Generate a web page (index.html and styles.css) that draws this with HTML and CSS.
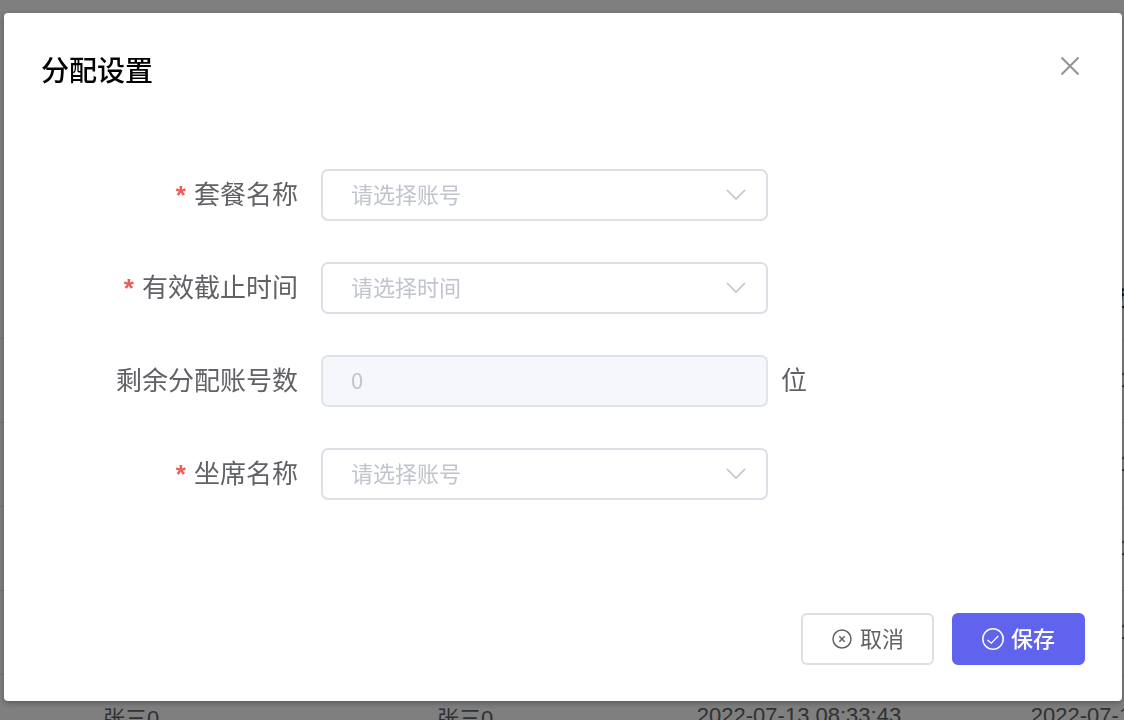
FILE: index.html
```html
<!DOCTYPE html>
<html lang="zh-CN">
<head>
  <meta charset="UTF-8" />
  <meta name="viewport" content="width=device-width, initial-scale=1.0"/>
  <title>分配设置</title>
  <link rel="stylesheet" href="styles.css">
</head>
<body>
  <!-- List page behind the dialog -->
  <div class="page" aria-hidden="true">
    <table class="list">
      <tbody>
        <tr><td></td><td></td><td></td><td class="head">最近时间</td></tr>
        <tr><td></td><td></td><td></td><td>2022-07-13 08:33:43</td></tr>
        <tr><td></td><td></td><td></td><td>2022-07-13 08:33:43</td></tr>
        <tr><td></td><td></td><td></td><td>2022-07-13 08:33:43</td></tr>
        <tr><td></td><td></td><td></td><td>2022-07-13 08:33:43</td></tr>
        <tr><td>张三0</td><td>张三0</td><td>2022-07-13 08:33:43</td><td>2022-07-13 08:33:43</td></tr>
      </tbody>
    </table>
  </div>

  <div class="overlay">
    <form class="dialog" role="dialog" aria-labelledby="dialogTitle">
      <div class="dialog-header">
        <h1 id="dialogTitle">分配设置</h1>
        <button type="button" class="close-btn" aria-label="关闭">
          <svg viewBox="0 0 20 20" width="20" height="20"><path d="M1.5 1.5l17 17M18.5 1.5l-17 17"/></svg>
        </button>
      </div>

      <div class="dialog-body">
        <div class="form-item">
          <label class="required" for="packageName">套餐名称</label>
          <div class="field">
            <select id="packageName" required>
              <option value="">请选择账号</option>
            </select>
            <svg class="arrow" viewBox="0 0 20 12" width="20" height="12"><path d="M1 1l9 9L19 1"/></svg>
          </div>
        </div>
        <div class="form-item">
          <label class="required" for="endTime">有效截止时间</label>
          <div class="field">
            <select id="endTime" required>
              <option value="">请选择时间</option>
            </select>
            <svg class="arrow" viewBox="0 0 20 12" width="20" height="12"><path d="M1 1l9 9L19 1"/></svg>
          </div>
        </div>
        <div class="form-item">
          <label for="remaining">剩余分配账号数</label>
          <div class="field">
            <input type="text" id="remaining" value="0" disabled>
          </div>
          <span class="unit">位</span>
        </div>
        <div class="form-item">
          <label class="required" for="seatName">坐席名称</label>
          <div class="field">
            <select id="seatName" required>
              <option value="">请选择账号</option>
            </select>
            <svg class="arrow" viewBox="0 0 20 12" width="20" height="12"><path d="M1 1l9 9L19 1"/></svg>
          </div>
        </div>
      </div>

      <div class="dialog-footer">
        <button type="button" class="btn">
          <svg viewBox="0 0 22 22" width="22" height="22"><circle cx="11" cy="11" r="9"/><path d="M8.3 8.3l5.4 5.4M13.7 8.3l-5.4 5.4"/></svg>
          <span>取消</span>
        </button>
        <button type="button" class="btn btn-primary">
          <svg viewBox="0 0 22 22" width="22" height="22"><circle cx="11" cy="11" r="10.2"/><path d="M5.5 12l3.8 3.2 7-7.2" stroke-width="1.2"/></svg>
          <span>保存</span>
        </button>
      </div>
    </form>
  </div>
</body>
</html>
```

FILE: styles.css
```css
* {
  box-sizing: border-box;
}

body {
  margin: 0;
  font-family: "Liberation Sans", "Noto Sans CJK SC", sans-serif;
  color: #606266;
  background: #fff;
}

.page {
  height: 100vh;
  overflow: hidden;
  padding-top: 254px;
}

.list {
  width: 1336px;
  margin-left: -36px;
  table-layout: fixed;
  border-collapse: collapse;
}

.list td {
  height: 84px;
  padding: 0;
  border-bottom: 1px solid #dfe1e6;
  font-size: 22px;
  text-align: center;
  white-space: nowrap;
}

.list .head {
  color: #303133;
  font-weight: bold;
}

.overlay {
  position: fixed;
  inset: 0;
  padding: 13px 2px 0 4px;
  background: rgba(0, 0, 0, 0.5);
}

.dialog {
  padding: 36px 37px;
  background: #fff;
  border-radius: 4px;
  box-shadow: 0 2px 6px rgba(0, 0, 0, 0.3);
  font-family: "Noto Sans CJK SC", sans-serif;
}

.dialog-header {
  display: flex;
  justify-content: space-between;
  align-items: flex-start;
}

h1 {
  margin: 0;
  font-size: 28px;
  line-height: 40px;
  font-weight: 500;
  color: #000;
}

svg {
  flex: none;
  fill: none;
  stroke: currentColor;
}

.close-btn {
  display: flex;
  padding: 7px 5px;
  border: none;
  background: none;
  color: #909399;
  cursor: pointer;
}

.close-btn svg {
  stroke-width: 2;
}

.dialog-body {
  display: flex;
  flex-direction: column;
  gap: 41px;
  padding: 80px 0 113px;
}

.form-item {
  display: flex;
  height: 52px;
}

.form-item label {
  width: 257px;
  font-size: 26px;
  line-height: 48px;
  text-align: right;
}

.required::before {
  content: "*";
  margin-right: 8px;
  font-family: "Liberation Sans", sans-serif;
  font-weight: bold;
  color: #f15b52;
}

.field {
  position: relative;
  width: 447px;
  margin-left: 23px;
}

.field select,
.field input {
  display: block;
  width: 100%;
  height: 52px;
  padding: 0 28px 4px;
  border: 2px solid #dcdfe6;
  border-radius: 7px;
  background: #fff;
  font-family: inherit;
  font-size: 22px;
  color: #c0c4cc;
  appearance: none;
}

.field input:disabled {
  border-color: #e0e4ed;
  background: #f5f7fa;
  opacity: 1;
}

.arrow {
  position: absolute;
  top: 20px;
  right: 22px;
  color: #c0c4cc;
  stroke-width: 1.6;
  pointer-events: none;
}

.unit {
  margin-left: 13px;
  font-size: 26px;
  line-height: 48px;
}

.dialog-footer {
  display: flex;
  justify-content: flex-end;
  gap: 18px;
}

.btn {
  display: flex;
  align-items: center;
  justify-content: center;
  gap: 7px;
  width: 133px;
  height: 52px;
  padding: 0;
  border: 2px solid #dcdfe6;
  border-radius: 6px;
  background: #fff;
  font-family: inherit;
  font-size: 22px;
  line-height: 32px;
  color: #606266;
  cursor: pointer;
}

.btn span {
  padding-bottom: 4px;
}

.btn svg {
  stroke-width: 1.5;
}

.btn-primary {
  border-color: #5f63ee;
  background: #5f63ee;
  font-weight: 500;
  color: #fff;
}
```
